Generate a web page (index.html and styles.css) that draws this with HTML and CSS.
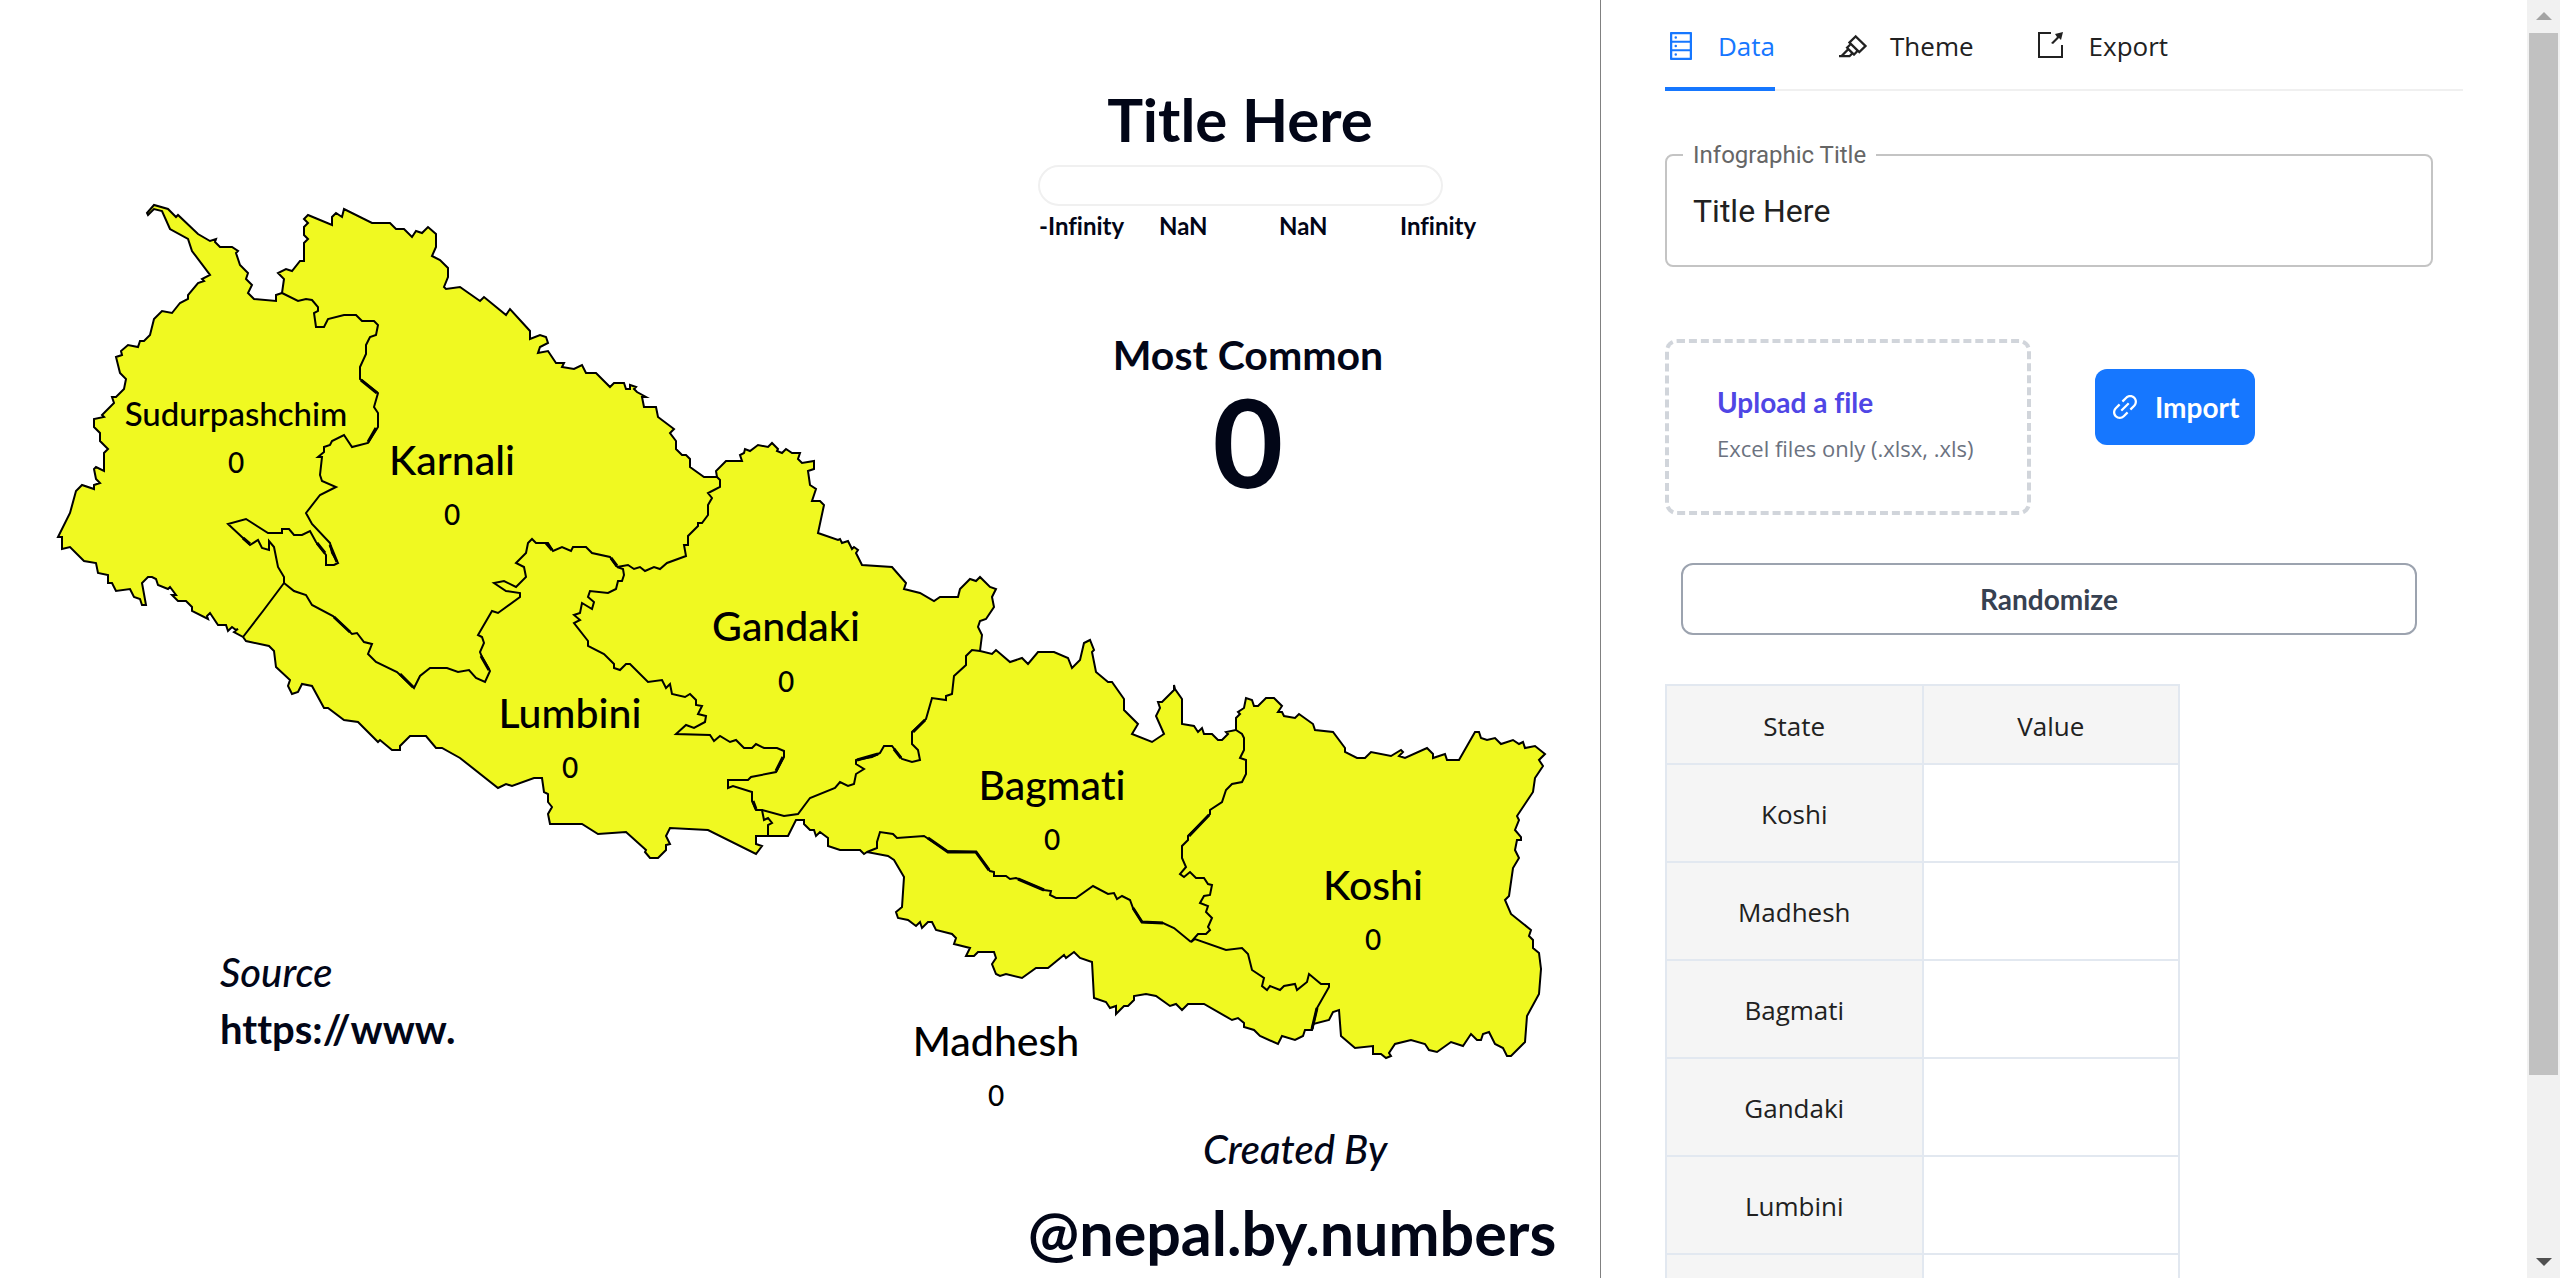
FILE: index.html
```html
<!DOCTYPE html>
<html lang="en">
<head>
<meta charset="utf-8">
<meta name="viewport" content="width=device-width, initial-scale=1">
<title>Nepal by Numbers</title>
<link rel="stylesheet" href="styles.css">
</head>
<body>
<div class="app">
<main class="canvas">
<svg class="infographic" viewBox="0 0 1600 1278" role="img" aria-label="Map of the provinces of Nepal">
<path class="land" d="M282 293 276 295 276 301 254 299 248 293 252 285 246 279 248 273 240 265 236 253 238 251 232 247 220 247 215 242 216 239 210 241 198 234 178 215 176 217 168 209 154 205 147 213 148 215 154 209 162 211 170 229 188 239 192 251 210 275 202 279 204 281 198 283 188 295 188 299 180 303 172 313 162 311 154 319 150 335 144 341 140 341 138 347 128 345 121 351 122 355 116 357 120 373 126 379 124 389 116 397 112 397 114 403 102 415 104 417 94 419 94 427 100 433 100 441 108 449 104 453 104 471 96 467 94 469 96 479 100 483 94 485 94 489 82 485 76 491 70 513 58 537 62 537 62 549 70 547 84 561 96 563 98 573 108 575 108 583 112 583 116 591 130 589 134 597 140 599 142 605 146 605 142 583 148 577 152 577 156 579 158 585 168 589 170 587 176 595 172 595 178 601 186 601 192 607 192 611 208 619 207 616 210 613 218 625 226 625 228 631 232 627 236 630 238 629 234 632 243 637 246 641 269 646 274 651 276 667 290 680 288 686 292 694 298 692 302 684 312 686 324 708 328 708 344 720 358 722 378 742 380 740 392 750 400 750 400 746 410 736 426 736 436 748 442 748 460 758 498 788 506 784 512 786 534 778 542 778 544 792 548 794 548 802 552 807 548 814 550 824 582 824 598 834 626 832 646 850 645 852 650 858 658 858 666 850 666 845 670 844 666 836 670 828 708 830 756 854 762 846 756 844 756 836 768 836 788 836 796 820 804 820 804 824 810 830 814 830 816 836 820 832 828 838 828 846 840 850 860 850 864 854 867 852 888 856 894 860 904 877 902 907 896 912 898 918 908 920 916 926 920 922 922 928 928 922 932 922 936 930 952 934 956 938 954 944 970 948 966 956 974 956 978 952 994 952 996 958 992 964 996 974 1000 976 1006 974 1022 978 1036 968 1048 968 1064 955 1066 958 1074 952 1080 958 1092 962 1094 998 1106 1002 1110 1008 1116 1006 1116 1014 1124 1006 1128 1006 1134 1000 1134 996 1146 994 1156 996 1170 1006 1176 1004 1182 1010 1188 1004 1204 1004 1232 1020 1238 1018 1244 1023 1244 1027 1254 1030 1260 1036 1278 1044 1282 1036 1295 1040 1303 1036 1305 1030 1312 1030 1313 1024 1329 1020 1333 1012 1339 1010 1341 1036 1355 1048 1373 1046 1373 1054 1381 1054 1386 1058 1391 1056 1389 1053 1395 1044 1411 1040 1425 1044 1429 1050 1437 1052 1451 1042 1463 1046 1471 1034 1477 1040 1481 1040 1483 1034 1489 1032 1495 1044 1503 1048 1507 1056 1511 1056 1525 1042 1527 1016 1539 994 1541 969 1539 953 1533 948 1533 940 1529 936 1531 930 1511 914 1505 900 1509 896 1513 868 1519 858 1515 850 1517 840 1521 840 1521 837 1515 830 1519 820 1517 816 1533 792 1535 778 1543 766 1539 760 1545 754 1535 746 1525 748 1523 742 1519 744 1513 740 1501 744 1495 738 1487 740 1481 738 1479 732 1475 732 1459 760 1447 760 1445 754 1433 758 1433 754 1427 748 1405 758 1399 756 1403 752 1401 750 1391 756 1371 752 1365 758 1357 758 1345 752 1345 748 1333 732 1315 730 1313 724 1299 714 1295 718 1284 716 1282 712 1278 712 1282 706 1274 698 1266 698 1258 706 1254 706 1252 700 1246 698 1244 708 1238 712 1240 714 1236 718 1236 730 1226 732 1228 734 1222 740 1218 740 1212 734 1204 734 1202 728 1198 732 1194 726 1182 724 1182 699 1175 689 1174 685 1174 690 1162 702 1158 702 1160 708 1156 716 1164 734 1152 742 1132 734 1138 724 1124 710 1124 699 1112 682 1108 682 1096 672 1092 652 1094 650 1090 640 1084 643 1080 660 1072 668 1068 658 1054 652 1038 652 1028 664 1022 658 1010 662 996 650 992 654 980 651 982 635 978 627 980 621 986 619 994 607 992 597 996 589 990 587 980 577 976 581 970 579 960 589 958 597 940 597 934 601 920 593 904 589 906 583 892 567 862 565 856 553 858 550 854 547 852 549 848 541 842 543 840 539 838 540 818 533 824 505 820 501 812 501 816 489 810 485 808 471 814 469 814 461 802 463 798 459 800 453 792 453 786 449 782 453 777 451 778 449 772 443 768 447 758 445 750 451 745 449 744 453 740 455 742 461 726 461 716 471 717 477 704 477 690 467 690 459 686 455 682 455 676 449 676 441 670 433 674 429 658 417 656 407 644 407 642 397 646 397 637 392 634 389 636 387 630 385 630 389 626 389 624 383 614 383 610 387 596 373 586 373 582 365 574 369 562 367 564 363 556 363 548 351 538 353 540 347 548 343 546 337 540 335 530 339 530 331 510 309 506 315 484 297 480 301 460 287 446 289 444 287 448 277 448 268 440 260 432 256 436 247 436 234 428 227 422 233 416 231 412 237 404 229 396 229 390 223 372 223 344 209 342 217 336 213 332 217 332 225 308 215 304 219 308 223 304 227 304 235 308 239 304 243 304 261 300 261 292 271 286 269 278 273 284 279Z"/>
<g class="border">
<path d="M282 293 298 301 306 299 312 300 318 307 318 311 314 313 316 327 324 327 328 319 344 315 356 315 362 321 374 321 378 325 376 335 370 337 366 345 366 354 360 367 360 379 378 393 374 407 378 413 378 427 368 443 352 447 344 435 332 441 330 445 324 447 324 452 318 457 322 457 320 475 322 481 336 487 320 495 306 513 312 524 330 543 332 553 338 563 334 565 326 565 326 555 316 542 310 531 302 535 294 535 289 529 282 529 282 533 268 533 246 519 228 524 243 538 250 545 258 540 262 548 269 550 269 541 274 547 278 567 284 577 284 583"/>
<path d="M284 583 263 611 243 637"/>
<path d="M284 583 294 591 306 595 312 605 333 616 352 634 357 633 364 642 372 644 368 654 376 662 397 672 414 688 420 676 430 668 447 668 458 672 469 670 476 678 485 682 490 671 482 657 480 652 484 643 482 637 478 635 492 611 498 613 520 597 520 593 506 591 494 583 504 581 516 587 526 577 524 567 516 563 526 553 528 543 532 539 536 543 548 543 553 551 562 547 571 551 573 547 586 547 592 553 610 557 617 567"/>
<path d="M617 567 628 565 634 569 640 567 645 571 654 567 660 569 667 563 686 556 684 545 688 545 688 536 698 526 698 523 702 523 708 515 708 505 712 498 708 493 714 490 720 487 720 480 717 477"/>
<path d="M617 567 623 569 624 575 622 581 618 581 616 589 608 593 590 591 588 597 594 602 592 609 582 603 580 613 574 615 580 620 574 623 588 641 588 646 604 654 614 664 614 668 620 670 626 664 630 664 648 682 662 680 666 688 670 684 672 694 685 697 690 694 696 700 696 705 702 706 698 714 706 716 705 722 694 728 686 725 676 734 710 735 714 741 720 736 730 742 736 740 744 748 752 748 756 744 764 748 777 748 784 751 784 757 776 772 751 777 748 780 728 780 728 788 733 786 752 792 752 801 756 810 762 810 764 820 768 818 772 823 768 825 768 836"/>
<path d="M762 810 784 816 798 814 810 798 835 788 840 782 848 786 854 784 856 774 864 769 856 764 856 760 872 757 880 753 884 746 892 746 902 759 912 762 920 760 918 750 912 744 912 732 926 719 932 698 946 700 946 696 952 694 954 676 966 665 966 656 972 650 980 651"/>
<path d="M867 852 877 848 877 842 880 832 893 834 897 838 924 836 947 851 976 852 990 871 994 872 994 876 1006 876 1010 879 1016 878 1044 890 1051 891 1050 895 1056 898 1076 898 1093 886 1108 894 1114 893 1117 899 1122 896 1130 900 1133 908 1142 922 1163 923 1174 928 1191 942"/>
<path d="M1191 942 1198 934 1206 934 1210 930 1208 927 1212 918 1206 912 1208 906 1200 903 1204 896 1210 895 1212 885 1208 884 1204 878 1196 878 1190 872 1184 877 1180 874 1186 867 1182 858 1182 846 1188 840 1188 836 1210 814 1210 810 1222 802 1226 790 1232 784 1242 782 1246 774 1246 760 1240 758 1244 750 1244 738 1242 734 1236 730"/>
<path d="M1191 942 1195 939 1226 950 1242 948 1248 954 1252 970 1264 978 1262 986 1267 990 1270 986 1280 990 1284 986 1295 984 1297 990 1307 982 1309 974 1321 984 1329 984 1329 987 1317 1008 1312 1030"/>
</g>
<g class="border border-heavy">
<path d="M361 380 377 393M376 428 368 442M243 538 250 544M317 543 325 553M330 545 337 562M334 617 350 632M400 674 413 687M481 656 489 670M546 543 552 550M611 558 617 566M857 760 878 754M894 749 901 758M913 732 925 720M928 838 948 852 976 852 989 870M1018 879 1044 890M1133 908 1142 922 1163 923M1189 836 1209 815M1317 1008 1312 1029M753 801 756 809M783 757 776 771"/>
</g>
<g class="province">
<text class="province-small" x="236" y="426">Sudurpashchim</text>
<text x="452" y="475">Karnali</text>
<text x="786" y="641">Gandaki</text>
<text x="570" y="728">Lumbini</text>
<text x="1052" y="800">Bagmati</text>
<text x="1373" y="900">Koshi</text>
<text x="996" y="1056">Madhesh</text>
</g>
<g class="count">
<text x="236" y="473">0</text>
<text x="452" y="525">0</text>
<text x="786" y="692">0</text>
<text x="570" y="778">0</text>
<text x="1052" y="850">0</text>
<text x="1373" y="950">0</text>
<text x="996" y="1106">0</text>
</g>
<text class="title" x="1240" y="142">Title Here</text>
<rect class="scale" x="1039" y="166" width="403" height="39" rx="20"/>
<g class="scale-label">
<text x="1039" y="235">-Infinity</text>
<text x="1159" y="235">NaN</text>
<text x="1279" y="235">NaN</text>
<text x="1400" y="235">Infinity</text>
</g>
<text class="common" x="1248" y="370">Most Common</text>
<text class="common-value" x="1248" y="488">0</text>
<text class="caption" x="220" y="987">Source</text>
<text class="source" x="220" y="1044">https://www.</text>
<text class="caption" x="1203" y="1164">Created By</text>
<text class="handle" x="1292" y="1256">@nepal.by.numbers</text>
</svg>
</main>
<aside class="panel">
<nav class="tabs">
<button class="tab tab-active" type="button">
<svg class="icon" viewBox="0 0 1024 1024" aria-hidden="true"><path d="M832 64H192c-17.700 0-32 14.300-32 32v832c0 17.700 14.300 32 32 32h640c17.700 0 32-14.300 32-32V96c0-17.700-14.300-32-32-32zm-600 72h560v208H232V136zm560 480H232V408h560v208zm0 272H232V680h560v208zM304 240a40 40 0 1 0 80 0 40 40 0 1 0-80 0zm0 272a40 40 0 1 0 80 0 40 40 0 1 0-80 0zm0 272a40 40 0 1 0 80 0 40 40 0 1 0-80 0z"/></svg>
Data</button>
<button class="tab" type="button">
<svg class="icon" viewBox="0 0 1024 1024" aria-hidden="true"><path fill-rule="evenodd" d="M957.600 507.400L603.200 158.200a7.900 7.900 0 0 0-11.200 0L353.300 393.400a8 8 0 0 0 0 11.400l40 39.400-117.200 115.300a8 8 0 0 0 0 11.400l39.500 38.900-189.100 187H72.100c-4.400 0-8.100 3.600-8.100 8V860c0 4.400 3.600 8 8 8h344.900c2.100 0 4.100-.8 5.600-2.300l76.100-75.600 40.400 39.800a7.900 7.900 0 0 0 11.200 0l117.100-115.600 40.100 39.500a7.900 7.900 0 0 0 11.200 0l238.700-235.200c3.400-3 3.400-8 .3-11.200zM389.800 796.200H229.600l134.400-133 80.100 78.900zM544.600 734.100L373.200 565.200l68.600-67.600 171.400 168.900zM712.700 658.200L450.400 399.600l147.100-145 262.300 258.600z"/></svg>
Theme</button>
<button class="tab" type="button">
<svg class="icon" viewBox="0 0 32 32" aria-hidden="true"><path d="M2 2H15V4H4V26H25V15H27V28H2z"/><path d="M15 13L21 7 19 4 27 2 25 10 23 8 17 14z"/></svg>
Export</button>
</nav>
<form class="controls">
<fieldset class="field">
<legend><label for="title">Infographic Title</label></legend>
<input id="title" type="text" value="Title Here">
</fieldset>
<div class="import-row">
<button class="upload" type="button">
<span class="upload-title">Upload a file</span>
<span class="upload-hint">Excel files only (.xlsx, .xls)</span>
</button>
<button class="import" type="button">
<svg class="icon" viewBox="0 0 1024 1024" aria-hidden="true"><path d="M574 665.400a8 8 0 0 0-11.300 0L446.500 781.600c-53.800 53.800-144.600 59.500-204 0-59.500-59.500-53.800-150.200 0-204l116.200-116.200c3.100-3.100 3.100-8.200 0-11.300l-39.800-39.800a8 8 0 0 0-11.300 0L191.400 526.500c-84.600 84.600-84.600 221.500 0 306s221.500 84.600 306 0l116.200-116.200c3.100-3.100 3.100-8.200 0-11.300L574 665.400zm258.600-474c-84.600-84.600-221.500-84.600-306 0L410.300 307.600a8 8 0 0 0 0 11.300l39.700 39.700c3.100 3.100 8.200 3.100 11.300 0l116.200-116.200c53.800-53.800 144.600-59.500 204 0 59.500 59.500 53.800 150.200 0 204L665.300 562.600a8 8 0 0 0 0 11.300l39.800 39.800c3.100 3.100 8.200 3.100 11.300 0l116.200-116.200c84.500-84.600 84.500-221.500 0-306.100zM610.100 372.300a8 8 0 0 0-11.300 0L372.300 598.700a8 8 0 0 0 0 11.300l39.600 39.600c3.100 3.100 8.200 3.100 11.300 0l226.400-226.400c3.100-3.100 3.100-8.200 0-11.300z"/></svg>
Import</button>
</div>
<button class="randomize" type="button">Randomize</button>
<table class="sheet">
<thead><tr><th scope="col">State</th><th scope="col">Value</th></tr></thead>
<tbody>
<tr><th scope="row">Koshi</th><td></td></tr>
<tr><th scope="row">Madhesh</th><td></td></tr>
<tr><th scope="row">Bagmati</th><td></td></tr>
<tr><th scope="row">Gandaki</th><td></td></tr>
<tr><th scope="row">Lumbini</th><td></td></tr>
<tr><th></th><td></td></tr>
</tbody>
</table>
</form>
</aside>
<div class="scrollbar" aria-hidden="true">
<svg class="arrow arrow-up" viewBox="0 0 33 33"><path d="M9 20 17 12 25 20z"/></svg>
<div class="track"><div class="thumb"></div></div>
<svg class="arrow arrow-down" viewBox="0 0 33 33"><path d="M9 13 17 21 25 13z"/></svg>
</div>
</div>
</body>
</html>
```
FILE: styles.css
```css
* { box-sizing: border-box; }

body {
  margin: 0;
  background: #fff;
  color: #212121;
  font-family: "Open Sans", "Noto Sans", sans-serif;
  font-size: 26px;
  font-variant-ligatures: none;
}

button, input {
  font: inherit;
  font-variant-ligatures: none;
  color: inherit;
  background: none;
  border: 0;
  padding: 0;
}

button { cursor: pointer; }

.app {
  display: grid;
  grid-template-columns: minmax(0, 1600fr) minmax(0, 927fr) 33px;
  height: 100vh;
  overflow: hidden;
}

.canvas { overflow: hidden; }

.infographic {
  display: block;
  width: 100%;
  fill: #020617;
  font-family: Lato, sans-serif;
}

.land { fill: #f0f921; stroke: #000; stroke-width: 2; }
.border { fill: none; stroke: #000; stroke-width: 2; }
.border-heavy { stroke-width: 3; }

.province {
  fill: #000;
  font-size: 41px;
  font-weight: 500;
  text-anchor: middle;
}
.province-small { font-size: 33px; }

.count { fill: #000; font-size: 28px; font-weight: 500; text-anchor: middle; }

.title { font-size: 60px; font-weight: 700; text-anchor: middle; }
.scale { fill: #fff; stroke: #f0f0f0; stroke-width: 2; }
.scale-label { font-size: 24px; font-weight: 700; }
.common { font-size: 41px; font-weight: 700; text-anchor: middle; }
.common-value { font-size: 122px; font-weight: 700; text-anchor: middle; }
.caption { font-size: 40px; font-style: italic; font-weight: 500; }
.source { font-size: 40px; font-weight: 700; }
.handle { font-size: 61px; font-weight: 700; text-anchor: middle; }

.panel {
  border-left: 1px solid #808080;
  padding: 0 64px;
  overflow: hidden;
}

.icon { width: 32px; height: 32px; fill: currentColor; flex: none; }

.tabs {
  display: flex;
  gap: 62px;
  height: 91px;
  border-bottom: 2px solid #f0f0f0;
}

.tab {
  display: flex;
  align-items: center;
  gap: 21px;
  height: 91px;
  padding-top: 4px;
  border-bottom: 4px solid transparent;
}

.tab-active { color: #1677ff; border-bottom-color: #1677ff; }

.controls { padding: 48px 30px 0 0; }

.field {
  margin: 0;
  padding: 0 26px;
  height: 128px;
  border: 2px solid #c4c4c4;
  border-radius: 8px;
  font-family: Roboto, sans-serif;
}

.field legend {
  margin-left: -10px;
  padding: 0 10px;
  color: #666;
  font-size: 24px;
  line-height: 32px;
}

.field input {
  width: 100%;
  height: 80px;
  font-size: 32px;
  outline: none;
}

.import-row {
  display: flex;
  align-items: flex-start;
  gap: 64px;
  margin-top: 72px;
}

.upload {
  display: flex;
  flex-direction: column;
  justify-content: center;
  gap: 6px;
  width: 366px;
  height: 176px;
  padding: 0 0 4px 48px;
  border: 4px dashed #d1d5db;
  border-radius: 12px;
  text-align: left;
}

.upload-title {
  color: #4f46e5;
  font-family: Lato, sans-serif;
  font-size: 28px;
  font-weight: 700;
  line-height: 40px;
}

.upload-hint { color: #6b7280; font-size: 22px; line-height: 40px; }

.import {
  display: flex;
  align-items: center;
  gap: 14px;
  height: 76px;
  margin-top: 30px;
  padding: 0 16px 0 14px;
  border-radius: 12px;
  background: #1677ff;
  color: #fff;
  font-family: Lato, sans-serif;
  font-size: 28px;
  font-weight: 700;
}

.randomize {
  display: block;
  width: calc(100% - 32px);
  height: 72px;
  margin: 48px 16px 0;
  border: 2px solid #9ca3af;
  border-radius: 12px;
  color: #374151;
  font-family: Lato, sans-serif;
  font-size: 28px;
  font-weight: 700;
}

.sheet {
  width: 515px;
  margin-top: 49px;
  border-collapse: collapse;
  table-layout: fixed;
}

.sheet th, .sheet td { height: 98px; padding: 2px 0 0; border: 2px solid #e2e8f0; }
.sheet th { background: #f5f5f5; font-weight: 400; }
.sheet thead th { height: 79px; }

.scrollbar {
  display: flex;
  flex-direction: column;
  background: #f1f1f1;
}

.arrow { width: 33px; height: 33px; }
.arrow-up { fill: #a3a3a3; }
.arrow-down { fill: #505050; }
.track { flex: 1; padding: 0 2px; }
.thumb { height: 86%; background: #c1c1c1; }
```
